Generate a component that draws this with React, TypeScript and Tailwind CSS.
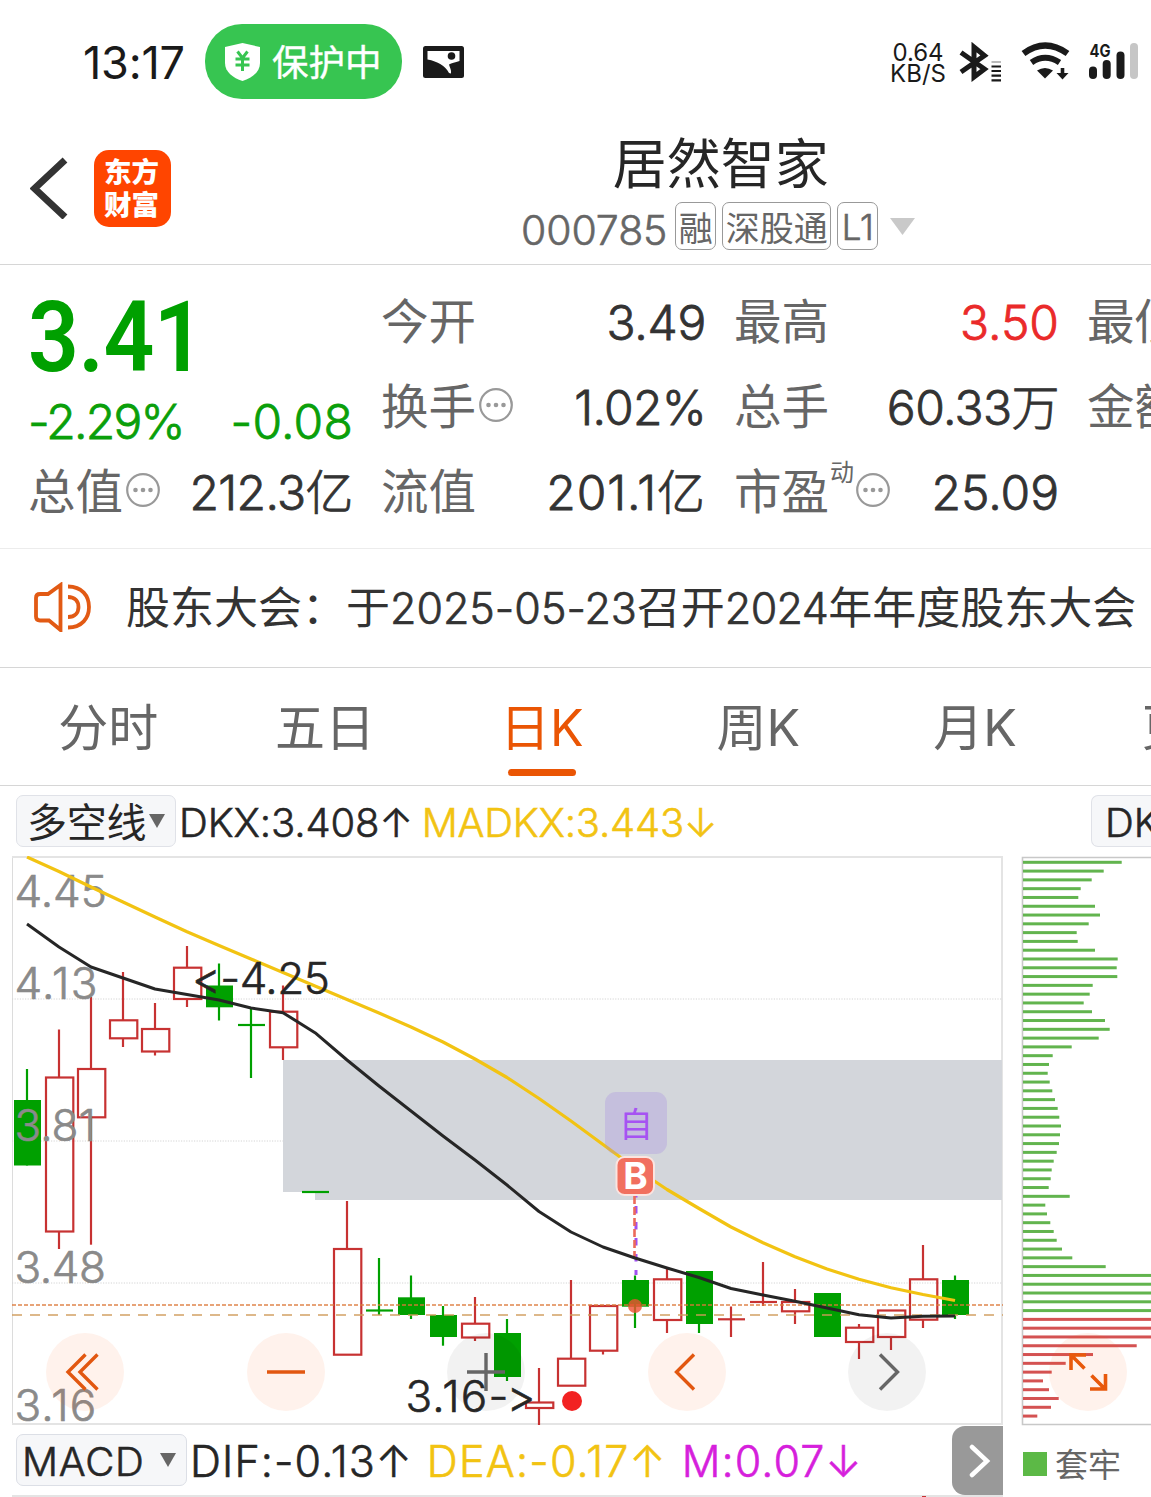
import React from "react";

type Candle = {
  x: number;
  kind: "up" | "down" | "upFlat" | "downFlat";
  high: number;
  top: number;
  bottom: number;
  low: number;
};

const c = (
  x: number,
  kind: Candle["kind"],
  high: number,
  top: number,
  bottom: number,
  low: number
): Candle => ({ x, kind, high, top, bottom, low });

const CANDLES: Candle[] = [
  c(27, "down", 1069, 1100, 1165.5, 1165.5),
  c(59, "up", 1029.5, 1077.5, 1231.5, 1249),
  c(91, "up", 997, 1069, 1117.3, 1244.7),
  c(123, "up", 972, 1020.3, 1038.3, 1047),
  c(155, "up", 1003, 1029, 1051.5, 1055.5),
  c(187, "up", 946, 967.7, 999, 1007),
  c(219, "down", 963.5, 985.5, 1007.3, 1020.5),
  c(251, "downFlat", 1009, 1025, 1025, 1078),
  c(283, "up", 985.5, 1011.7, 1047.3, 1060),
  c(315, "downFlat", 1192, 1192, 1192, 1192),
  c(347, "up", 1201, 1249, 1354.7, 1354.7),
  c(379, "downFlat", 1258, 1310.5, 1310.5, 1315),
  c(411, "down", 1275.5, 1297.3, 1315, 1319),
  c(443, "down", 1306, 1315, 1337, 1345.7),
  c(475, "up", 1297, 1323.7, 1337.5, 1341),
  c(507, "down", 1319, 1333, 1377, 1381),
  c(539, "up", 1368, 1402.5, 1408, 1425),
  c(571, "up", 1280, 1358.7, 1385.7, 1385.7),
  c(603, "up", 1306, 1306, 1350.7, 1354.5),
  c(635, "down", 1275.5, 1280, 1306.7, 1328),
  c(667, "up", 1269, 1279.3, 1320, 1333),
  c(699, "down", 1271, 1271, 1324, 1333),
  c(731, "upFlat", 1306.5, 1319.3, 1319.3, 1337),
  c(763, "upFlat", 1262, 1302, 1302, 1306),
  c(795, "up", 1289, 1302, 1311.3, 1324),
  c(827, "down", 1293, 1293, 1337, 1337),
  c(859, "up", 1324, 1327.7, 1342, 1359),
  c(891, "up", 1310.5, 1310.5, 1337, 1350),
  c(923, "up", 1245, 1279.3, 1319.7, 1328),
  c(955, "down", 1275.5, 1280, 1315, 1319),
];

const DKX =
  "27,924 59,947 91,967 123,978 155,989 187,994.5 219,1000 251,1008 283,1012.7 315,1032.7 347,1060 379,1086 411,1111 443,1136 475,1160 507,1185 539,1211.5 571,1232 603,1247 635,1258 667,1268 699,1277.5 731,1288.5 763,1295 795,1301.3 827,1308 859,1314.7 891,1318 923,1316.3 955,1316";
const MADKX =
  "27,857 59,871.5 91,887 123,902 155,917 187,931.7 219,945.5 251,959 283,972.5 315,986 347,999.5 379,1013 411,1027 443,1042 475,1059 507,1077.5 539,1098.5 571,1121 603,1144.5 635,1168 667,1189.5 699,1208.5 731,1227 763,1242.7 795,1256.7 827,1269 859,1279.3 891,1287.7 923,1294.5 955,1300.5";

const CHIP_ENDS = [
  1121.7, 1103.7, 1091.7, 1080.7, 1078.3, 1095, 1100, 1088.7, 1076.7, 1077.7, 1095, 1117.7, 1116.7,
  1117.3, 1092.7, 1089.7, 1083.7, 1092, 1105, 1109.7, 1098.7, 1071.7, 1052.7, 1049, 1047.7, 1049.7,
  1052.3, 1055, 1057.7, 1059.3, 1061, 1060, 1059, 1056.7, 1053.7, 1051.7, 1050.7, 1048.7, 1069.7,
  1045.3, 1047, 1050.3, 1053.7, 1056.7, 1062, 1072.3, 1105.7, 1151, 1151, 1151, 1151, 1151, 1151,
  1151, 1151, 1136.7, 1093, 1065.7, 1051.7, 1043, 1049, 1058.7, 1051, 1037.3,
];
const FIRST_RED = 52;

const UP = "#c73232";
const DOWN = "#00a000";

function CandleShape({ d }: { d: Candle }) {
  if (d.kind === "down") {
    return (
      <g>
        <line x1={d.x} x2={d.x} y1={d.high} y2={d.low} stroke={DOWN} strokeWidth={2.2} />
        <rect x={d.x - 13} y={d.top} width={27} height={d.bottom - d.top} fill={DOWN} />
      </g>
    );
  }
  if (d.kind === "up") {
    return (
      <g stroke={UP} strokeWidth={2.2} fill="none">
        <line x1={d.x} x2={d.x} y1={d.high} y2={d.top} />
        <line x1={d.x} x2={d.x} y1={d.bottom} y2={d.low} />
        <rect x={d.x - 13} y={d.top} width={27.3} height={d.bottom - d.top} />
      </g>
    );
  }
  const color = d.kind === "upFlat" ? UP : DOWN;
  return (
    <g stroke={color} strokeWidth={2.2}>
      <line x1={d.x} x2={d.x} y1={d.high} y2={d.low} />
      <line x1={d.x - 13} x2={d.x + 14} y1={d.top} y2={d.top} />
    </g>
  );
}

function KLineChart() {
  return (
    <svg className="block h-[570px] w-[1010px] shrink-0" viewBox="0 856 1010 570">
      <path d="M12.5 857V1424" stroke="#dcdcdc" strokeWidth={1} />
      <path d="M12 857H1002V1424H12" stroke="#e4e4e4" strokeWidth={2} fill="none" />
      {[999, 1141, 1283].map((y) => (
        <line key={y} x1={12} x2={1002} y1={y} y2={y} stroke="#d4d4d4" strokeDasharray="1.2 1.4" />
      ))}
      <path d="M283 1060H1002V1200H315V1192H283Z" fill="#d3d6db" />
      {CANDLES.map((d) => (
        <CandleShape key={d.x} d={d} />
      ))}
      <line x1={12} x2={1003} y1={1305} y2={1305} stroke="#dc7838" strokeOpacity={0.68} strokeWidth={2} strokeDasharray="4 2" />
      <line x1={12} x2={1003} y1={1315} y2={1315} stroke="#cf9a58" strokeOpacity={0.7} strokeWidth={1.8} strokeDasharray="10 8" />
      <g fill="#8a8a8a" stroke="#8a8a8a" strokeWidth={0.7} fontSize={44} fontWeight={300}>
        <text x={14.5} y={907}>4.45</text>
        <text x={14.5} y={999} letterSpacing={1.4}>4.13</text>
        <text x={14.5} y={1141}>3.81</text>
        <text x={14.5} y={1283} letterSpacing={-0.4}>3.48</text>
        <text x={14.5} y={1421} letterSpacing={1.2}>3.16</text>
      </g>
      <path d="M636 1196V1275" stroke="#a050f0" strokeWidth={3} strokeDasharray="7.5 8.500" strokeDashoffset={6} />
      <path d="M634.5 1196V1262" stroke="#ec6a5a" strokeWidth={2.6} strokeDasharray="8 3" />
      <polyline points={DKX} fill="none" stroke="#262626" strokeWidth={3} strokeLinejoin="round" />
      <polyline points={MADKX} fill="none" stroke="#f2c312" strokeWidth={3.2} strokeLinejoin="round" />
      <circle cx={635} cy={1306} r={7} fill="#f05032" fillOpacity={0.8} />
      <circle cx={572} cy={1401} r={10} fill="#f22222" />

      <rect x={605} y={1092} width={62} height={62} rx={11} fill="#a78be0" fillOpacity={0.3} />
      <text x={636} y={1137} textAnchor="middle" fontSize={34} fill="#a653f2">自</text>
      <rect x={616.5} y={1157} width={37.5} height={38} rx={8} fill="#f1705f" stroke="#fbe4e0" strokeWidth={2} />
      <text x={635.5} y={1189} textAnchor="middle" fontSize={37} fontWeight={700} fill="#fff">B</text>

      <g fill="none" strokeWidth={3.4}>
        <circle cx={85} cy={1372} r={39} fill="#ff5a0a" fillOpacity={0.08} />
        <circle cx={286} cy={1372} r={39} fill="#ff5a0a" fillOpacity={0.08} />
        <circle cx={486} cy={1372} r={39} fill="#000" fillOpacity={0.05} />
        <circle cx={687} cy={1372} r={39} fill="#ff5a0a" fillOpacity={0.08} />
        <circle cx={887} cy={1372} r={39} fill="#000" fillOpacity={0.05} />
        <g stroke="#e25710">
          <path d="M85.5 1354.5L68 1372L85.5 1389.5M97.5 1354.5L80 1372L97.5 1389.5" />
          <path d="M267 1372H305" />
          <path d="M694 1354.5L676.5 1372L694 1389.5" />
        </g>
        <g stroke="#666">
          <path d="M467 1372H505M486 1353V1391" />
          <path d="M880 1354.5L897.5 1372L880 1389.5" />
        </g>
      </g>
      <g fill="#262626" stroke="#262626" strokeWidth={0.6} fontSize={44} fontWeight={300}>
        <text x={192} y={994} letterSpacing={-0.5}>&lt;-4.25</text>
        <text x={405.5} y={1411.5} letterSpacing={1.2}>3.16<tspan letterSpacing={-1.5}>-&gt;</tspan></text>
      </g>
    </svg>
  );
}

function ChipChart() {
  return (
    <svg className="block h-[570px] w-[141px] shrink-0" viewBox="1010 856 141 570">
      <path d="M1151 857.5H1022.5V1424.5H1151" fill="none" stroke="#c8c8c8" strokeWidth={1.6} />
      {CHIP_ENDS.map((end, i) => (
        <rect key={i} x={1023} y={860.8 + i * 8.79} width={end - 1023} height={3} fill={i < FIRST_RED ? "#62b44e" : "#d45252"} />
      ))}
      <circle cx={1088} cy={1372} r={39} fill="#ff5a0a" fillOpacity={0.08} />
      <path
        d="M1086 1355H1071V1370M1071 1355L1084.5 1368.5M1090 1389H1105.500V1374M1105 1389L1091.500 1375.500"
        fill="none"
        stroke="#e8590c"
        strokeWidth={3.6}
      />
    </svg>
  );
}

function MoreIcon({ className = "" }: { className?: string }) {
  return (
    <svg className={"relative -top-[3px] h-[34px] w-[34px] shrink-0 " + className} viewBox="0 0 34 34">
      <circle cx="17" cy="17" r="15.8" fill="none" stroke="#999" strokeWidth="2.2" />
      <circle cx="9.500" cy="17" r="2.3" fill="#999" />
      <circle cx="17" cy="17" r="2.3" fill="#999" />
      <circle cx="24.500" cy="17" r="2.3" fill="#999" />
    </svg>
  );
}

function Stat({
  label,
  value,
  valueClass = "text-[#333]",
  sup,
  more,
}: {
  label: string;
  value?: string;
  valueClass?: string;
  sup?: string;
  more?: boolean;
}) {
  return (
    <div className="flex h-[85px] items-center whitespace-nowrap leading-[85px]">
      <span className="-ml-[2px] -mt-[2px] text-[47.500px] text-[#666]">{label}</span>
      {sup && <span className="relative -top-[20px] ml-[1px] text-[24px] text-[#666]">{sup}</span>}
      {more && <MoreIcon className={sup ? "ml-[2px]" : "ml-[3px]"} />}
      {value && (
        <span className={"ml-auto text-[48px] font-light [-webkit-text-stroke:0.8px] " + valueClass}>{value}</span>
      )}
    </div>
  );
}

function StatusBar() {
  return (
    <div className="flex h-[123px] items-center pl-[83px] pr-[12px]">
      <span className="w-[122px] pt-[2px] text-[45px] font-normal tracking-[-0.200px] text-[#1a1a1a]">13:17</span>
      <div className="flex h-[75px] w-[197px] items-center rounded-[37px] bg-[#37c551] pl-[20px]">
        <svg className="h-[38px] w-[35px]" viewBox="0 0 35 38">
          <path d="M17.500 0L35 4V20C35 29 27 35 17.500 38C8 35 0 29 0 20V4Z" fill="#fff" />
          <path d="M12.500 8.500L17.500 15L22.500 8.500M10.500 16H24.500M10.500 22H24.500M17.500 15V28" fill="none" stroke="#37c551" strokeWidth="3" />
        </svg>
        <span className="ml-[12px] pt-[4px] text-[36.500px] font-normal leading-[71px] text-white [-webkit-text-stroke:0.4px]">保护中</span>
      </div>
      <svg className="ml-[21px] h-[32px] w-[41px]" viewBox="0 0 41 32">
        <rect width="41" height="32" rx="2.500" fill="#1a1a1a" />
        <path d="M4.500 5H36.500V15C32 17 28.500 16.500 26 18.500C27 22 28.500 24 28 27.500L26 27C22 19.500 15 15.500 4.500 13.500Z" fill="#fff" />
        <circle cx="28.500" cy="10" r="3.800" fill="#1a1a1a" />
      </svg>
      <div className="ml-auto flex items-center">
        <div className="mr-[13px] flex w-[56px] flex-col items-center pt-[2px] text-[24px] font-normal leading-[21px] text-[#1a1a1a]">
          <span>0.64</span>
          <span>KB/S</span>
        </div>
        <svg className="h-[40px] w-[180px]" viewBox="959 42 180 40">
          <path d="M961 52.500L984.500 69L974 77V47L984.500 55.500L961 72" fill="none" stroke="#1a1a1a" strokeWidth="5" />
          <rect x="991.500" y="61" width="9.500" height="2" fill="#bbb" />
          <path d="M991.500 66.500H1001M991.500 71H1001M991.500 75.700H1001M991.500 80.300H1001" stroke="#1a1a1a" strokeWidth="2.200" />
          <path d="M1023.500 53.500Q1045 37.500 1067.500 53.500" fill="none" stroke="#1a1a1a" strokeWidth="6.400" />
          <path d="M1031.500 62.500Q1045 53 1059.500 62.500" fill="none" stroke="#1a1a1a" strokeWidth="6" />
          <path d="M1037 70.500Q1045 65.500 1053 70.500L1045 78.500Z" fill="#1a1a1a" />
          <path d="M1060.700 68H1064.300V73H1068.500L1062.500 79.500L1056.500 73H1060.700Z" fill="#1a1a1a" />
          <text x="1089.500" y="56.500" fontSize="17.500" fontWeight="700" fill="#1a1a1a" textLength="21" lengthAdjust="spacingAndGlyphs">4G</text>
          <rect x="1089" y="66.500" width="8" height="12.500" rx="4" fill="#1a1a1a" />
          <rect x="1102.700" y="60" width="8" height="19" rx="4" fill="#1a1a1a" />
          <rect x="1116.500" y="51.500" width="8" height="27.500" rx="4" fill="#1a1a1a" />
          <rect x="1130" y="43" width="8" height="36" rx="4" fill="#c6c6c6" />
        </svg>
      </div>
    </div>
  );
}

function Header() {
  return (
    <header className="flex h-[142px] items-start border-b border-[#d6d6d6] pl-[30px]">
      <svg className="mt-[34px] h-[62px] w-[38px]" viewBox="30 157 38 62">
        <path d="M65 160L34.500 188.500L65 217" fill="none" stroke="#333" strokeWidth="7" />
      </svg>
      <div className="ml-[26px] mt-[27px] flex h-[77px] w-[77px] flex-col items-center justify-center rounded-[15px] bg-[#ff4500] pr-[2px] text-[27.500px] font-black leading-[33px] text-white">
        <span>东方</span>
        <span>财富</span>
      </div>
      <div className="ml-[350px] flex flex-col items-center pt-[10px]">
        <h1 className="ml-[5px] text-[54px] leading-[64px] text-[#262626]">居然智家</h1>
        <div className="mt-[1px] flex h-[56px] items-center text-[#666]">
          <span className="relative top-[4px] mr-[8px] text-[41px] font-light leading-[56px] tracking-[-0.100px] [-webkit-text-stroke:0.6px]">
            000785
          </span>
          <div className="flex items-center gap-[6px] text-[34px]">
            <span className="flex h-[48px] w-[41px] items-center justify-center rounded-[7px] border-[1.500px] border-[#999] pt-[6px] leading-[46px]">融</span>
            <span className="flex h-[48px] w-[109px] items-center justify-center rounded-[7px] border-[1.500px] border-[#999] pt-[6px] leading-[46px]">深股通</span>
            <span className="flex h-[48px] w-[41px] items-center justify-center rounded-[7px] border-[1.500px] border-[#999] pt-[3px] text-[35px] font-light leading-[45px] [-webkit-text-stroke:0.6px]">
              L1
            </span>
          </div>
          <svg className="ml-[12px] h-[17px] w-[25px]" viewBox="0 0 25 17">
            <path d="M0 0H25L12.500 17Z" fill="#c9c9c9" />
          </svg>
        </div>
      </div>
    </header>
  );
}

function Quote() {
  return (
    <section className="grid h-[284px] grid-cols-[323px_323px_323px_323px] gap-x-[30px] overflow-hidden border-b border-[#ececec] pl-[30px] pt-[15px] text-[#333]">
      <div>
        <div className="-ml-[2px] h-[116px] origin-left scale-x-[0.91] font-['Roboto'] text-[98px] font-semibold leading-[116px] tracking-[-0.500px] text-[#00a000]">
          3.41
        </div>
        <div className="-ml-[2px] flex h-[54px] justify-between text-[48px] font-light leading-[51px] text-[#0a9f0a] [-webkit-text-stroke:0.8px]">
          <span className="tracking-[-1.800px]">-2.29%</span>
          <span className="tracking-[0.200px]">-0.08</span>
        </div>
        <Stat label="总值" more value="212.3亿" valueClass="text-[#333] tracking-[-0.600px]" />
      </div>
      <div>
        <Stat label="今开" value="3.49" valueClass="text-[#333] tracking-[-0.300px]" />
        <Stat label="换手" more value="1.02%" valueClass="text-[#333] tracking-[-0.700px]" />
        <Stat label="流值" value="201.1亿" valueClass="text-[#333] tracking-[0.900px]" />
      </div>
      <div>
        <Stat label="最高" value="3.50" valueClass="text-[#ea2a2a]" />
        <Stat label="总手" value="60.33万" valueClass="text-[#333] tracking-[-0.600px]" />
        <Stat label="市盈" sup="动" more value="25.09" />
      </div>
      <div>
        <Stat label="最低" />
        <Stat label="金额" />
      </div>
    </section>
  );
}

function Notice() {
  return (
    <section className="flex h-[119px] items-center overflow-hidden whitespace-nowrap border-b border-[#d6d6d6] pl-[33px]">
      <svg className="relative -top-px h-[50px] w-[58px] shrink-0" viewBox="33 582 58 50">
        <g fill="none" stroke="#e25a14" strokeWidth="3.800">
          <path d="M60.500 585V630L49 620.500H40Q36 620.500 36 616.500V598Q36 594 40 594H48Z" />
          <path d="M68 586.500C82 586.500 89 596 89 607C89 618 82 627.500 68 627.500" />
          <path d="M68 597C75 597 78.500 601.500 78.500 607C78.500 612.500 75 617 68 617" />
        </g>
      </svg>
      <p className="ml-[35px] pt-[1px] text-[44px] leading-[117px] text-[#333]">
        股东大会：于
        <span className="text-[43px] font-light [-webkit-text-stroke:0.7px]">2025-05-23</span>召开
        <span className="text-[43px] font-light tracking-[-0.600px] [-webkit-text-stroke:0.7px]">2024</span>年年度股东大会
      </p>
    </section>
  );
}

function Tabs() {
  const tabs = ["分时", "五日", "日K", "周K", "月K", "更多"];
  return (
    <nav className="flex h-[118px] overflow-hidden border-b border-[#d6d6d6]">
      {tabs.map((t) => (
        <div
          key={t}
          className={
            "relative flex w-[216.700px] shrink-0 justify-center text-[50px] font-normal leading-[120px] " +
            (t === "日K" ? "text-[#ea5504]" : "text-[#666]")
          }
        >
          {t}
          {t === "日K" && <span className="absolute bottom-[9px] left-1/2 h-[7px] w-[68px] -translate-x-1/2 rounded-full bg-[#ea5504]" />}
        </div>
      ))}
    </nav>
  );
}

function Caret() {
  return (
    <svg className="h-[14px] w-[16px]" viewBox="0 0 16 14">
      <path d="M0 0H16L8 14Z" fill="#666" />
    </svg>
  );
}

export default function App() {
  return (
    <main className="h-[1497px] w-[1151px] overflow-hidden bg-white font-['Inter','Noto_Sans_CJK_SC',sans-serif] [font-feature-settings:'calt'_0]">
      <StatusBar />
      <Header />
      <Quote />
      <Notice />
      <Tabs />
      <div className="flex h-[70px] items-center whitespace-nowrap text-[40px] font-light leading-[60px] text-[#262626]">
        <div className="ml-[16px] flex h-[52px] w-[160px] items-center rounded-[7px] border border-[#e0e2e8] bg-[#f6f7f9] pl-[10px] leading-[50px]">
          <span className="mr-[3px] pt-[3px] font-normal tracking-[-0.300px]">多空线</span>
          <Caret />
        </div>
        <span className="ml-[3px] pt-[3px] tracking-[-0.100px] [-webkit-text-stroke:0.6px]">DKX:3.408↑</span>
        <span className="ml-[9px] pt-[3px] tracking-[-0.200px] text-[#f2c312] [-webkit-text-stroke:0.6px]">MADKX:3.443↓</span>
        <div className="ml-auto h-[52px] w-[60px] overflow-hidden rounded-l-[7px] border border-r-0 border-[#e0e2e8] bg-[#f6f7f9] pl-[13px] leading-[54px] [-webkit-text-stroke:0.6px]">
          DKX
        </div>
      </div>
      <div className="flex">
        <KLineChart />
        <ChipChart />
      </div>
      <div className="flex h-[71px] items-start whitespace-nowrap text-[43px] font-light leading-[71px] text-[#262626]">
        <div className="relative ml-[12px] flex h-[71px] w-[991px] border-b-2 border-[#e4e4e4] [-webkit-text-stroke:0.6px]">
          <div className="ml-[4px] mt-[8px] flex h-[52px] w-[171px] shrink-0 items-center rounded-[7px] border border-[#dcdfe6] bg-[#f6f7f9] pl-[5px] text-[40px] leading-[54px]">
            <span className="w-[138px] pt-[3px] tracking-[0.700px]">MACD</span>
            <Caret />
          </div>
          <span className="ml-[3px] tracking-[1.100px]">DIF:-0.13↑</span>
          <span className="ml-[14px] tracking-[1.200px] text-[#f2c312]">DEA:-0.17↑</span>
          <span className="ml-[15px] tracking-[1.100px] text-[#d61fdc]">M:0.07↓</span>
          <div className="ml-auto flex h-[69px] w-[51px] items-center justify-center rounded-l-[13px] bg-[#999]">
            <svg className="ml-[4px] h-[34px] w-[22px]" viewBox="0 0 22 34">
              <path d="M3 3L18 17L3 31" fill="none" stroke="#fff" strokeWidth="4.500" strokeLinecap="round" />
            </svg>
          </div>
          <span className="absolute -bottom-[2px] left-[910px] h-px w-[4px] bg-[#c73232]" />
        </div>
        <div className="ml-[20px] flex items-center">
          <span className="h-[24px] w-[24px] bg-[#5cb946]" />
          <span className="ml-[8px] pt-[4px] text-[33px] font-normal leading-[71px] text-[#666]">套牢</span>
        </div>
      </div>
    </main>
  );
}
